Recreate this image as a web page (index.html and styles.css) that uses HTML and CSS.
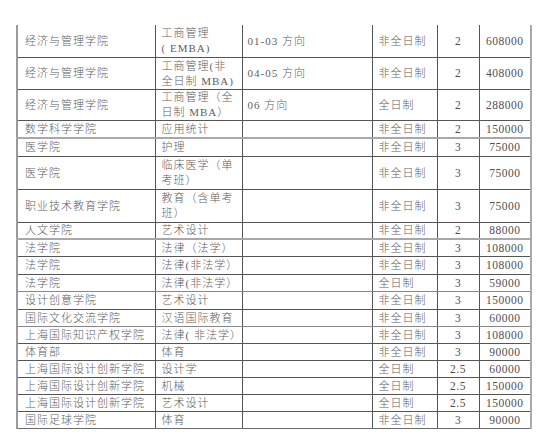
FILE: index.html
```html
<!DOCTYPE html>
<html lang="zh-CN">
<head>
<meta charset="utf-8">
<title>招生专业学费表</title>
<link rel="stylesheet" href="styles.css">
</head>
<body>
<table class="fees">
  <colgroup>
    <col class="c-school"><col class="c-major"><col class="c-dir"><col class="c-mode"><col class="c-years"><col class="c-fee">
  </colgroup>
  <tbody>
    <tr class="h33"><td class="school">经济与管理学院</td><td class="major">工商管理<br>( EMBA)</td><td class="dir">01-03 方向</td><td class="mode">非全日制</td><td class="num">2</td><td class="num">608000</td></tr>
    <tr class="h32"><td class="school">经济与管理学院</td><td class="major">工商管理(非<br>全日制 MBA)</td><td class="dir">04-05 方向</td><td class="mode">非全日制</td><td class="num">2</td><td class="num">408000</td></tr>
    <tr class="h31"><td class="school">经济与管理学院</td><td class="major">工商管理（全<br>日制 MBA）</td><td class="dir">06 方向</td><td class="mode">全日制</td><td class="num">2</td><td class="num">288000</td></tr>
    <tr class="h17 soft"><td class="school">数学科学学院</td><td class="major">应用统计</td><td class="dir"></td><td class="mode">非全日制</td><td class="num">2</td><td class="num">150000</td></tr>
    <tr class="h18"><td class="school">医学院</td><td class="major">护理</td><td class="dir"></td><td class="mode">非全日制</td><td class="num">3</td><td class="num">75000</td></tr>
    <tr class="h33"><td class="school">医学院</td><td class="major">临床医学（单<br>考班）</td><td class="dir"></td><td class="mode">非全日制</td><td class="num">3</td><td class="num">75000</td></tr>
    <tr class="h33"><td class="school">职业技术教育学院</td><td class="major">教育（含单考<br>班）</td><td class="dir"></td><td class="mode">非全日制</td><td class="num">3</td><td class="num">75000</td></tr>
    <tr class="h16 soft"><td class="school">人文学院</td><td class="major">艺术设计</td><td class="dir"></td><td class="mode">非全日制</td><td class="num">2</td><td class="num">88000</td></tr>
    <tr class="h17"><td class="school">法学院</td><td class="major">法律（法学）</td><td class="dir"></td><td class="mode">非全日制</td><td class="num">3</td><td class="num">108000</td></tr>
    <tr class="h18"><td class="school">法学院</td><td class="major">法律(非法学）</td><td class="dir"></td><td class="mode">非全日制</td><td class="num">3</td><td class="num">108000</td></tr>
    <tr class="h17 light"><td class="school">法学院</td><td class="major">法律(非法学）</td><td class="dir"></td><td class="mode">全日制</td><td class="num">3</td><td class="num">59000</td></tr>
    <tr class="h18"><td class="school">设计创意学院</td><td class="major">艺术设计</td><td class="dir"></td><td class="mode">非全日制</td><td class="num">3</td><td class="num">150000</td></tr>
    <tr class="h17 light"><td class="school">国际文化交流学院</td><td class="major">汉语国际教育</td><td class="dir"></td><td class="mode">非全日制</td><td class="num">3</td><td class="num">60000</td></tr>
    <tr class="h17"><td class="school">上海国际知识产权学院</td><td class="major">法律( 非法学）</td><td class="dir"></td><td class="mode">非全日制</td><td class="num">3</td><td class="num">108000</td></tr>
    <tr class="h17"><td class="school">体育部</td><td class="major">体育</td><td class="dir"></td><td class="mode">非全日制</td><td class="num">3</td><td class="num">90000</td></tr>
    <tr class="h17"><td class="school">上海国际设计创新学院</td><td class="major">设计学</td><td class="dir"></td><td class="mode">全日制</td><td class="num">2.5</td><td class="num">60000</td></tr>
    <tr class="h17"><td class="school">上海国际设计创新学院</td><td class="major">机械</td><td class="dir"></td><td class="mode">全日制</td><td class="num">2.5</td><td class="num">150000</td></tr>
    <tr class="h17"><td class="school">上海国际设计创新学院</td><td class="major">艺术设计</td><td class="dir"></td><td class="mode">全日制</td><td class="num">2.5</td><td class="num">150000</td></tr>
    <tr class="h17 last"><td class="school">国际足球学院</td><td class="major">体育</td><td class="dir"></td><td class="mode">非全日制</td><td class="num">3</td><td class="num">90000</td></tr>
  </tbody>
</table>
</body>
</html>
```

FILE: styles.css
```css
html, body {
  margin: 0;
  padding: 0;
  background: #ffffff;
}

body {
  font-family: "Liberation Serif", "Noto Sans CJK SC", serif;
  font-size: 11px;
  font-weight: 300;
  letter-spacing: 1px;
  color: #606060;
}

.fees {
  margin: 25px 0 0 16px;
  border-collapse: collapse;
  table-layout: fixed;
  width: 514px;
}

.c-school { width: 138px; }
.c-major { width: 87px; }
.c-dir { width: 130px; }
.c-mode { width: 65px; }
.c-years { width: 42px; }
.c-fee { width: 52px; }

.fees td {
  border: 1px solid #555555;
  padding: 0 4px 0 6px;
  vertical-align: middle;
  line-height: 15px;
  white-space: nowrap;
  overflow: hidden;
}

.fees tr:first-child td {
  border-top: none;
}

.fees td.school {
  border-left: 2px solid #9a9a9a;
  padding-left: 7px;
}

.fees td.dir {
  padding-left: 5px;
}

.fees td.num {
  text-align: center;
  padding: 0;
  font-size: 11.5px;
  letter-spacing: 0.5px;
  color: #505050;
}

.fees td:last-child {
  border-right: 2px solid #aaaaaa;
}

.fees tr.soft td {
  border-bottom: 2px solid #a8a8a8;
}

.fees tr.light td {
  border-bottom-color: #888888;
}

.fees tr.last td {
  border-bottom: 1px solid #6a6a6a;
}

.h33 td { height: 32px; }
.h32 td { height: 31px; }
.h31 td { height: 30px; }
.h18 td { height: 17px; }
.h17 td { height: 16px; }
.h16 td { height: 15px; }
```
